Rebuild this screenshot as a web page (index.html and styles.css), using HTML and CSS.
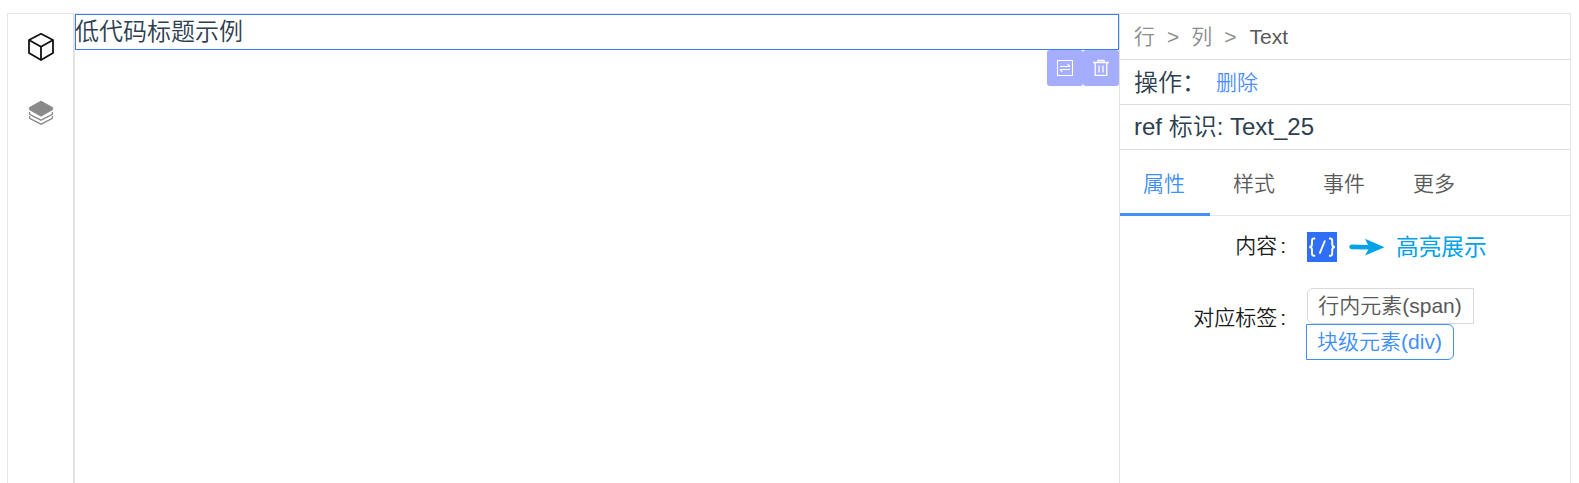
FILE: index.html
```html
<!DOCTYPE html>
<html lang="zh-CN">
<head>
<meta charset="utf-8">
<title>低代码编辑器</title>
<link rel="stylesheet" href="styles.css">
</head>
<body>
<div class="editor">
  <nav class="sidebar">
    <svg class="side-icon" viewBox="0 0 28 30" fill="none" stroke="#111" stroke-width="1.8" stroke-linejoin="round"><path d="M14 1.800 26 8v13L14 28 2 21V8zM2 8l12 6.800L26 8M14 14.800V28"/></svg>
    <svg class="side-icon" viewBox="0 0 28 30"><path d="M14 3.200 25.600 9.600v2L14 18.200 2.400 11.600v-2z" fill="#8a8a8a" stroke="#8a8a8a" stroke-linejoin="round"/><path d="M2.600 14v2.400L14 22.200l11.400-5.800V14M2.600 18v2.400L14 26.200l11.400-5.800V18" fill="none" stroke="#8a8a8a" stroke-width="1.3"/></svg>
  </nav>
  <main class="canvas">
    <div class="selected">低代码标题示例
      <div class="tools">
        <span class="tool"><svg viewBox="0 0 18 18" fill="none" stroke="#fff" stroke-width="1.1"><path d="M1.500 1.500h15v15h-15zM4 7.500h10M11.500 5.200 14 7.500M14 10.500H4M4 10.500l2.500 2.300"/></svg></span>
        <span class="tool"><svg viewBox="0 0 18 18" fill="none" stroke="#fff" stroke-width="1.3"><path d="M1 3.500h16M6 3V1.500h6V3M3.200 4v12.400h11.600V4M7 6.500v7M11 6.500v7"/></svg></span>
      </div>
    </div>
  </main>
  <aside class="panel">
    <div class="row crumbs"><span class="crumb">行</span><span>&gt;</span><span class="crumb">列</span><span>&gt;</span><span class="current">Text</span></div>
    <div class="row"><span class="action-label">操作：</span><a class="delete">删除</a></div>
    <div class="row ref-row">ref 标识: Text_25</div>
    <div class="tabs">
      <span class="tab active">属性</span><span class="tab">样式</span><span class="tab">事件</span><span class="tab">更多</span>
    </div>
    <div class="form">
      <div class="item content-item">
        <label class="label">内容<span class="colon">:</span></label>
        <span class="bind"><svg viewBox="0 0 30 30" fill="none" stroke="#fff" stroke-width="1.9"><path d="M8.200 6.500H7Q5 6.500 5 8.500V12Q5 15 2.300 15 5 15 5 18v3.500Q5 23.700 7 23.700h1.200M22 6.500h1.200Q25.200 6.500 25.200 8.500V12Q25.200 15 27.900 15 25.200 15 25.200 18v3.500Q25.200 23.700 23.200 23.700H22M18 8.500 12.600 21.700"/></svg></span>
        <svg class="arrow" viewBox="0 0 36 18"><path d="M2.500 6.500 19 7 16 0.800 35.500 9.200 16 17.500l3.400-6L2.500 11.200Q0.300 10.900 0.300 8.800T2.500 6.500z" fill="#00a2e8"/></svg>
        <span class="note">高亮展示</span>
      </div>
      <div class="item">
        <label class="label tag-label">对应标签<span class="colon">:</span></label>
        <div class="options">
          <span class="option">行内元素(span)</span>
          <span class="option chosen">块级元素(div)</span>
        </div>
      </div>
    </div>
  </aside>
</div>
</body>
</html>
```
FILE: styles.css
```css
* { box-sizing: border-box; }
body {
  margin: 0;
  padding: 13px 8px 0 7px;
  background: #fff;
  color: #2c3e50;
  font-family: "Liberation Sans", "Noto Sans CJK SC", sans-serif;
  font-size: 24px;
  font-weight: 350;
}
.editor {
  display: flex;
  height: 470px;
  border: 1px solid #e5e5e5;
  border-bottom: 0;
}
.sidebar {
  display: flex;
  flex-direction: column;
  align-items: center;
  gap: 36px;
  width: 67px;
  padding: 18px 0 0;
  border-right: 2px solid #e2e2e2;
}
.side-icon { width: 28px; height: 30px; }
.canvas { flex: 1; }
.selected {
  position: relative;
  height: 36px;
  line-height: 34px;
  text-indent: -1px;
  border: 1px solid #3b7cf5;
}
.tools {
  position: absolute;
  top: 35px;
  right: -1px;
  display: flex;
}
.tool {
  display: flex;
  align-items: center;
  justify-content: center;
  width: 36px;
  height: 36px;
  border-radius: 3px;
  background: #a5adff;
}
.tool svg { width: 18px; height: 18px; }
.panel {
  width: 451px;
  border-left: 1px solid #e2e2e2;
}
.row {
  display: flex;
  align-items: center;
  height: 45px;
  padding: 0 0 2px 14px;
  border-bottom: 1px solid #dcdcdc;
}
.ref-row { padding-bottom: 5px; }
.crumbs {
  height: 46px;
  padding-bottom: 0;
  gap: 12px;
  font-size: 21px;
  color: #8c8c8c;
}
.crumb { padding-bottom: 4px; }
.current { margin-left: 1px; color: #595959; }
.action-label { width: 82px; padding-bottom: 1px; white-space: nowrap; }
.delete { font-size: 21px; color: #4a8cff; }
.tabs {
  display: flex;
  height: 66px;
  border-bottom: 1px solid #e5e5e5;
  font-size: 21px;
  color: #595959;
}
.tab {
  width: 90px;
  height: 66px;
  padding-right: 2px;
  line-height: 67px;
  text-align: center;
}
.active { color: #3f8ffa; border-bottom: 3px solid #458ff8; }
.form {
  display: flex;
  flex-direction: column;
  gap: 26px;
  padding-top: 16px;
  font-size: 21px;
}
.item { display: flex; align-items: center; }
.label {
  width: 187px;
  padding-right: 21px;
  text-align: right;
  color: #1a1a1a;
}
.colon { margin-left: 3px; }
.bind { width: 30px; height: 30px; background: #2f6ff8; }
.content-item { height: 30px; }
.content-item .label { padding-bottom: 7px; }
.tag-label { padding-bottom: 17px; }
.bind svg { display: block; }
.arrow { width: 36px; height: 18px; margin-left: 12px; }
.note {
  margin-left: 11px;
  padding-bottom: 3px;
  font-size: 22.7px;
  font-weight: 400;
  color: #00a2e8;
}
.options { display: flex; flex-direction: column; align-items: flex-start; }
.option {
  height: 36px;
  width: 167px;
  padding-right: 1px;
  line-height: 34px;
  text-align: center;
  border: 1px solid #d9d9d9;
  border-radius: 6px 0 0 6px;
  color: #595959;
}
.chosen {
  width: 148px;
  margin-left: -1px;
  border-color: #3f8ffa;
  border-radius: 0 6px 6px 0;
  color: #3f8ffa;
}
```
